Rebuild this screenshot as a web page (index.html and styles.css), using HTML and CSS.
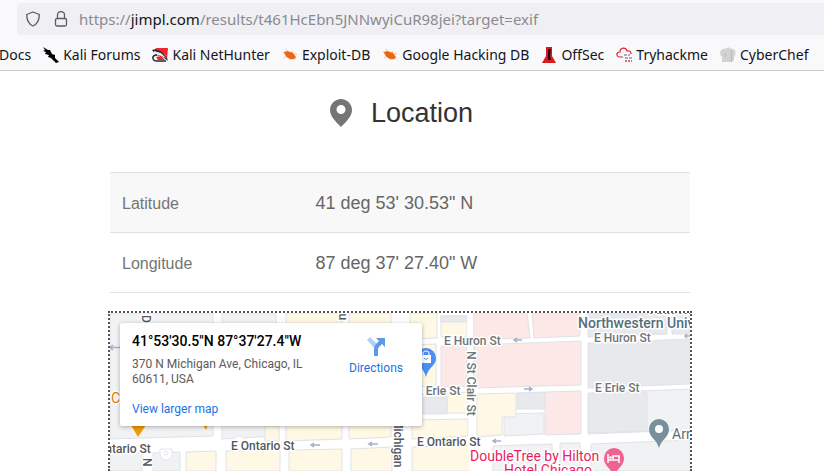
FILE: index.html
```html
<!DOCTYPE html>
<html lang="en">
<head>
<meta charset="utf-8">
<title>Location</title>
<link rel="stylesheet" href="styles.css">
</head>
<body>
<header class="browser">
  <div class="address">
    <svg class="address-icon" viewBox="0 0 16 16" aria-hidden="true"><path d="M8 1 14.300 3.500C14.300 9 12.500 13 8 15 3.500 13 1.700 9 1.700 3.500Z"/></svg>
    <svg class="address-icon" viewBox="0 0 16 16" aria-hidden="true"><rect x="2.500" y="7.500" width="11" height="7.500" rx="1.500"/><path d="M4.500 7.500V4a3.500 3.500 0 0 1 7 0v3.500"/></svg>
    <p class="url">https://<span class="host">jimpl.com</span>/results/t461HcEbn5JNNwyiCuR98jei?target=exif</p>
  </div>
  <nav class="bookmarks" aria-label="Bookmarks">
    <a class="bookmark" href="#">Docs</a>
    <a class="bookmark" href="#"><svg class="favicon" viewBox="0 0 16 16" aria-hidden="true"><path d="M0 0 5 3 7 3 9 7 12 8 12 11 16 15 13 16 8 11 5 10 6 8 2 7 3 5 0 4 2 3Z"/></svg>Kali Forums</a>
    <a class="bookmark" href="#"><svg class="favicon" viewBox="0 0 16 16" aria-hidden="true"><path fill="#f3262e" d="M3 1H16L15 12 13 8 8 5Z"/><path fill="#262833" d="M0 3 4 2 10 5 15 11 16 14 11 10 4 8Z"/><path fill="#e9eaf0" d="M2 4 9 6 14 11 9 9 2 7Z"/><path fill="none" stroke="#262833" stroke-width="1.500" d="M5 8C-1 8 0 14 5 14H14"/><path fill="#f3262e" d="M4 10 9 9 13 13 6 13Z"/></svg>Kali NetHunter</a>
    <a class="bookmark" href="#"><svg class="favicon" viewBox="0 0 16 16" aria-hidden="true"><path fill="none" stroke="#f7b690" d="M1 5 14 12M4 2 7 6M10 4 11 8M2 11 6 8M8 13 9 10M12 7H15"/><path fill="#ee6611" d="M2 5C5 3 9 5 11 6L14 10 12 12C8 13 3 10 2 5Z"/></svg>Exploit-DB</a>
    <a class="bookmark" href="#"><svg class="favicon" viewBox="0 0 16 16" aria-hidden="true"><path fill="none" stroke="#f7b690" d="M1 5 14 12M4 2 7 6M10 4 11 8M2 11 6 8M8 13 9 10M12 7H15"/><path fill="#ee6611" d="M2 5C5 3 9 5 11 6L14 10 12 12C8 13 3 10 2 5Z"/></svg>Google Hacking DB</a>
    <a class="bookmark" href="#"><svg class="favicon" viewBox="0 0 16 16" aria-hidden="true"><path fill="#d81920" d="M5 0H11V9L15 16H1L5 9Z"/><path fill="#220609" d="M7 2H10L9 9 10 13H7L7 9Z"/></svg>OffSec</a>
    <a class="bookmark" href="#"><svg class="favicon" viewBox="0 0 16 16" aria-hidden="true"><path fill="none" stroke="#d62734" stroke-width="1.200" d="M7 10H3C0 9 0 5 4 5 4 0 10 0 11 4 14 3 15 5 15 7"/><path fill="none" stroke="#92969c" stroke-width="1.500" stroke-dasharray="3 1" d="M8 8H14M9 11H16"/><path fill="none" stroke="#e56b73" stroke-width="2" stroke-dasharray="2 1" d="M9 14H16"/></svg>Tryhackme</a>
    <a class="bookmark" href="#"><svg class="favicon" viewBox="0 0 16 16" aria-hidden="true"><path fill="#d2d2d2" d="M2 15V10C-2 6 1 1 5 2 7 0 10 0 11 2 15 1 17 6 14 10V13L12 15Z"/><path fill="#bcbcbc" d="M11 3 12 3 12 15 11 15ZM5 6 6 6 6 10 5 10Z"/></svg>CyberChef</a>
  </nav>
</header>
<main class="page">
  <h1 class="title">
    <svg class="title-icon" viewBox="0 0 22 28" aria-hidden="true"><path fill-rule="evenodd" d="M11 0C5 0 0 5 0 11 0 17 5 22 11 28 17 22 22 17 22 11 22 5 17 0 11 0ZM11 6A4.500 4.500 0 1 1 11 15 4.500 4.500 0 0 1 11 6Z"/></svg>
    Location
  </h1>
  <table class="facts">
    <tr><th scope="row">Latitude</th><td>41 deg 53' 30.53" N</td></tr>
    <tr><th scope="row">Longitude</th><td>87 deg 37' 27.40" W</td></tr>
  </table>
  <section class="map" aria-label="Map">
    <svg class="map-canvas" viewBox="110 313 580 158" preserveAspectRatio="xMidYMin slice" aria-hidden="true">
      <path class="road" d="M110 313H690V471H110Z"/>
      <g class="block grey">
        <path d="M110 313H213V436L110 439ZM222 313H276V436L222 439ZM110 454 142 453V471H110ZM153 453 180 452V471H153Z"/>
        <path d="M504 414 544 413V434L504 436ZM493 446 552 444V471H493ZM560 443 580 443V471H560ZM591 444 690 440V471H591ZM588 393 690 389V430L588 434Z"/>
      </g>
      <g class="block cream">
        <path d="M286 313H342V439L286 441ZM349 313H391V437L349 439ZM410 313H437V338L410 339ZM410 345 436 344V386L410 387ZM186 452 216 451V471H186ZM226 451 280 450V471H226ZM289 450 342 449V471H289ZM351 449 392 447V471H351ZM412 447 471 445V471H412ZM412 420 468 419V436L412 439ZM447 393 469 392V413H447ZM477 394 516 393V417H502V435L477 437ZM265 426H279V441H265Z"/>
      </g>
      <g class="block slate">
        <path d="M420 397H447V414H420ZM517 393 545 392V409H517ZM588 313H667V334L588 337ZM672 313H690V334H672ZM588 343 690 339V384L588 388ZM589 394 647 392V431L589 433Z"/>
      </g>
      <g class="block rose">
        <path d="M473 313H527L530 338 473 340ZM532 313H580V336L534 338ZM441 346 467 345V386L441 387ZM473 345 581 341V385L473 388ZM545 392 581 391V434L545 435Z"/>
      </g>
      <path class="block cream" d="M441 316H467V337H441Z"/>
      <path class="block slate" d="M441 316H467V322H441Z"/>
      <path class="block rose" d="M467 345H474V386H467Z"/>
      <path class="road" d="M467 313H473V471H469Z"/>
      <path class="arrow" d="M121 347.500H110M113 345 110 347.500 113 350M320 445H311M314 443 311 445 314 447M378 444H369M372 442 369 444 372 446M522 340H514M517 338 514 340 517 342M524 389H532M529 387 532 389 529 391M501 441H493M496 439 493 441 496 443M690 336H685M687 334 685 336 687 338"/>
      <g class="ghost"><path d="M160 449H172V454A6 6 0 0 1 160 454ZM233 445V442A6 6 0 0 1 245 442V445"/><circle cx="166" cy="453" r="2"/></g>
      <g class="street">
        <text x="444" y="345">E Huron St</text><text x="594" y="342">E Huron St</text>
        <text x="416" y="395">E Erie St</text><text x="595" y="392">E Erie St</text>
        <text class="dark" x="97" y="453">Ontario St</text><text class="dark" x="231" y="450">E Ontario St</text><text class="dark" x="417" y="446">E Ontario St</text>
        <text transform="translate(467 351) rotate(90)">N St Clair St</text>
        <text class="dark" transform="translate(394 418) rotate(90)">Michigan</text>
        <text class="dark" transform="translate(339 306) rotate(90)">Ru</text>
        <text class="dark" transform="translate(142 315) rotate(90)">D</text>
        <text class="dark" transform="translate(143 458) rotate(90)">N</text>
      </g>
      <g class="place">
        <text class="school" x="650" y="314">Ann Rob</text>
        <text class="school" x="578" y="328">Northwestern University</text>
        <text class="museum" x="672" y="439">Arnold</text>
        <text class="food" x="111" y="403">C</text>
        <text class="hotel" x="504" y="475">Hotel Chicago</text><text class="hotel" x="470" y="461">DoubleTree by Hilton</text>
      </g>
      <path fill="#f29900" d="M131 425H146L138 437ZM203 425H208L206 430Z"/>
      <path fill="#4c8df6" d="M416 358A10 10 0 0 1 436 358C436 366 429 366 426 377 423 366 416 366 416 358Z"/>
      <path fill="#fff" d="M421 355H431V363H421Z"/><path fill="none" stroke="#fff" d="M423 355V353A3 2 0 0 1 429 353V355"/><path fill="none" stroke="#4c8df6" d="M424 358Q426 361 428 358"/>
      <path fill="#78909c" d="M649 429A10 10 0 0 1 669 429C669 438 662 438 659 448 656 438 649 438 649 429Z"/><circle cx="659" cy="429" r="4" fill="#fff"/>
      <path fill="#f06292" d="M604 458A10 10 0 0 1 624 458C624 467 617 467 614 477 611 467 604 467 604 458Z"/>
      <path fill="none" stroke="#fff" stroke-width="1.500" d="M608 454V463M608 460H619V463M613 459V456H619V460"/><circle cx="610.500" cy="457.500" r="1.300" fill="#fff"/>
    </svg>
    <div class="card">
      <div class="card-text">
        <h2 class="card-title">41°53'30.5"N 87°37'27.4"W</h2>
        <p class="card-address">370 N Michigan Ave, Chicago, IL 60611, USA</p>
        <a class="card-link" href="#">View larger map</a>
      </div>
      <a class="directions" href="#">
        <svg class="directions-icon" viewBox="0 0 22 22" aria-hidden="true"><path fill="#b3d1f5" d="M2 4 5 1 13 9 10 13Z"/><path fill="#5d9ae2" d="M9 20V13Q9 10 11 8L14 5 11 2H20V11L17 8 14 11Q13 12 13 14V20Z"/></svg>
        Directions
      </a>
    </div>
  </section>
</main>
</body>
</html>
```

FILE: styles.css
```css
* { box-sizing: border-box; }
body {
  margin: 0;
  height: 100vh;
  display: flex;
  flex-direction: column;
  overflow: hidden;
  background: #fff;
  font-family: "Liberation Sans", Arial, sans-serif;
}
a { color: inherit; text-decoration: none; }
h1, h2, p { margin: 0; font-weight: 400; }

.browser {
  flex: none;
  padding-top: 3px;
  background: #f9f9fb;
  border-bottom: 1px solid #ccc;
  color: #15141a;
  font-family: "Noto Sans", sans-serif;
}
.address {
  display: flex;
  align-items: center;
  gap: 12px;
  height: 32px;
  margin-left: 17px;
  padding-left: 8px;
  background: #f0f0f4;
  border-radius: 4px 0 0 4px;
}
.address-icon {
  width: 16px;
  height: 16px;
  fill: none;
  stroke: #5b5b66;
  stroke-width: 1.3;
  stroke-linejoin: round;
}
.url { margin-left: -2px; color: #8a8a90; font-size: 15px; white-space: nowrap; }
.host { color: #15141a; }
.bookmarks {
  display: flex;
  align-items: center;
  gap: 12px;
  height: 35px;
  margin-left: -1px;
  padding-top: 4px;
  font-size: 14px;
  white-space: nowrap;
}
.bookmark { display: flex; align-items: center; gap: 4px; }
.favicon { width: 16px; height: 16px; }

.page {
  flex: 1;
  min-height: 0;
  display: flex;
  flex-direction: column;
  width: 100%;
  max-width: 824px;
  margin: 0 auto;
  padding: 24px 132px 0 108px;
}
.title {
  display: flex;
  align-items: center;
  justify-content: center;
  gap: 19px;
  height: 36px;
  padding-left: 3px;
  color: #333;
  font-size: 27px;
}
.title-icon { width: 22px; height: 28px; fill: #757575; }
.facts {
  margin: 41px 2px 18px;
  border-collapse: collapse;
  border-bottom: 1px solid #e1e1e1;
  color: #666;
  text-align: left;
}
.facts tr { height: 60px; border-top: 1px solid #e1e1e1; }
.facts tr:first-child { background: #f8f8f8; }
.facts th {
  width: 33%;
  padding: 2px 12px 0;
  color: #757575;
  font-size: 16px;
  font-weight: 400;
}
.facts td { padding: 2px 14px 0; font-size: 18px; }

.map {
  flex: 1;
  min-height: 0;
  position: relative;
  border: 2px dotted #555;
  border-bottom: 0;
  overflow: hidden;
  font-family: Roboto, sans-serif;
}
.map-canvas { display: block; width: 100%; height: 100%; }
.road { fill: #fff; }
.block { stroke: #dfe2e7; stroke-width: 1; }
.grey { fill: #f1f2f4; }
.cream { fill: #fff8e5; }
.slate { fill: #e8e9ed; }
.rose { fill: #fbe8e7; }
.arrow { fill: none; stroke: #a9aec9; stroke-width: 1.5; }
.ghost { fill: #fff; stroke: #e3e5e8; }
.street text, .place text {
  stroke: #fff;
  stroke-width: 3px;
  stroke-linejoin: round;
  paint-order: stroke;
}
.street text { fill: #70757a; font-size: 12px; font-weight: 500; }
.street .dark { fill: #54585d; }
.place text { font-size: 14px; }
.place .school { fill: #546e7a; font-weight: 500; }
.place .museum { fill: #546e7a; }
.place .food { fill: #e37400; }
.place .hotel { fill: #e91e63; }

.card {
  position: absolute;
  top: 10px;
  left: 10px;
  display: flex;
  justify-content: space-between;
  width: 302px;
  height: 103px;
  padding: 10px 12px;
  background: #fff;
  border-radius: 2px;
  box-shadow: 0 1px 4px rgba(0, 0, 0, .3);
  font-size: 12px;
  line-height: 15px;
}
.card-text { width: 184px; }
.card-title { color: #000; font-size: 14px; font-weight: 500; line-height: 16px; white-space: nowrap; }
.card-address { margin: 8px 0 15px; color: #5b5b5b; }
.card-link, .directions { color: #1a73e8; }
.directions {
  display: flex;
  flex-direction: column;
  align-items: center;
  gap: 3px;
  width: 68px;
  padding-top: 3px;
}
.directions-icon { width: 22px; height: 22px; }
```
